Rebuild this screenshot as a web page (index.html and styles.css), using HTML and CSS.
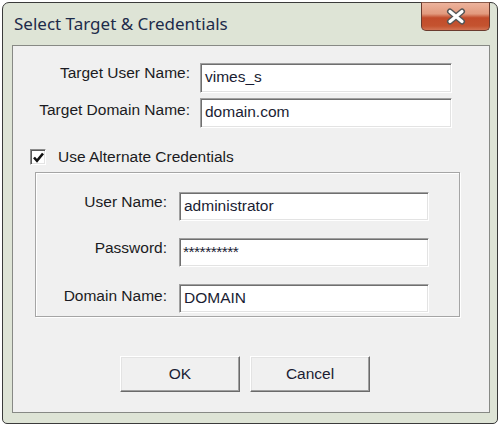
FILE: index.html
```html
<!DOCTYPE html>
<html>
<head>
<meta charset="utf-8">
<link rel="stylesheet" href="styles.css">
</head>
<body>
<div class="window">
  <div class="titlebar">
    <div class="title">Select Target &amp; Credentials</div>
    <div class="close">
      <svg width="24" height="17" viewBox="0 0 24 17">
        <path d="M6 3.5 L18 13.5 M18 3.5 L6 13.5" stroke="#555555" stroke-width="6" stroke-linecap="round"/>
        <path d="M6 3.5 L18 13.5 M18 3.5 L6 13.5" stroke="#ffffff" stroke-width="3.2" stroke-linecap="round"/>
      </svg>
    </div>
  </div>
  <div class="client">
    <div class="top-grid">
      <div class="label l1">Target User Name:</div>
      <div class="field wide">vimes_s</div>
      <div class="label l2">Target Domain Name:</div>
      <div class="field wide">domain.com</div>
    </div>
    <div class="check-row">
      <div class="checkbox">
        <svg width="13" height="13" viewBox="0 0 13 13">
          <path d="M2 6.5 L5 9.8 L11 2.5" stroke="#111" stroke-width="2.6" fill="none"/>
        </svg>
      </div>
      <div class="check-label">Use Alternate Credentials</div>
    </div>
    <div class="group">
      <div class="label g1">User Name:</div>
      <div class="field narrow">administrator</div>
      <div class="label g2">Password:</div>
      <div class="field narrow pw">**********</div>
      <div class="label g3">Domain Name:</div>
      <div class="field narrow">DOMAIN</div>
    </div>
    <div class="buttons">
      <div class="btn">OK</div>
      <div class="btn">Cancel</div>
    </div>
  </div>
</div>
</body>
</html>
```
FILE: styles.css
```css
* { box-sizing: border-box; }
html, body { margin: 0; padding: 0; background: #ffffff; }
body { font-family: "Liberation Sans", Arial, sans-serif; font-size: 15.5px; color: #1b1b22; }

.window {
  margin: 2px 0 0 2px;
  width: 496px;
  height: 422px;
  border: 1px solid #3b3b3b;
  border-radius: 7px 7px 5px 5px;
  background: #dee4d6;
  display: flex;
  flex-direction: column;
  padding: 0 7px 10px 9px;
}

.titlebar {
  height: 42px;
  display: flex;
  align-items: flex-start;
  justify-content: space-between;
  flex: none;
}
.title {
  font-family: "Noto Sans", "Open Sans", sans-serif;
  font-size: 17px;
  color: #1d2b4a;
  margin: 11px 0 0 2px;
  line-height: 20px;
}
.close {
  width: 69px;
  height: 29px;
  margin-top: -1px;
  border: 1px solid #6a3b2e;
  border-top-color: #8a5a4a;
  border-radius: 0 0 5px 5px;
  background: linear-gradient(to bottom, #edb39c 0%, #e29a7e 40%, #d07052 48%, #c24c2b 55%, #c4532f 85%, #d27353 100%);
  display: flex;
  align-items: center;
  justify-content: center;
}

.client {
  flex: 1;
  background: #f0f0f0;
  border: 1px solid #878985;
  display: flex;
  flex-direction: column;
}

.top-grid {
  display: grid;
  grid-template-columns: 177px 252px;
  column-gap: 10px;
  row-gap: 5px;
  padding-top: 17px;
}
.label {
  text-align: right;
  line-height: 18px;
  align-self: start;
  white-space: nowrap;
}
.l1 { padding-top: 1px; }
.l2 { padding-top: 3px; }

.field {
  background: #ffffff;
  border: 1px solid;
  border-color: #a0a0a0 #ffffff #ffffff #a0a0a0;
  box-shadow: inset 1px 1px 0 #6f6f6f, inset -1px -1px 0 #e3e3e3;
  padding: 3px 0 0 4px;
  line-height: 20px;
  color: #1a1d33;
  white-space: nowrap;
}
.wide { height: 30px; }
.narrow { height: 29px; }
.pw { letter-spacing: -0.5px; padding-left: 3px; }

.check-row {
  display: flex;
  align-items: center;
  margin-top: 21px;
  padding-left: 17px;
  height: 16px;
}
.checkbox {
  width: 16px;
  height: 16px;
  background: #ffffff;
  border: 1px solid;
  border-color: #8a8a8a #ffffff #ffffff #8a8a8a;
  box-shadow: inset 1px 1px 0 #5a5a5a, inset -1px -1px 0 #e3e3e3;
  display: flex;
  align-items: center;
  justify-content: center;
}
.check-label {
  margin-left: 12px;
  line-height: 16px;
}

.group {
  margin: 7px 0 0 22px;
  width: 425px;
  height: 145px;
  border: 1px solid #a5a5a5;
  box-shadow: inset 1px 1px 0 #ffffff, 1px 1px 0 #ffffff;
  display: grid;
  grid-template-columns: 131px 250px;
  column-gap: 12px;
  row-gap: 17px;
  padding-top: 19px;
  align-content: start;
}
.g1 { padding-top: 1px; }
.g2 { padding-top: 1px; }
.g3 { padding-top: 3px; }

.buttons {
  display: flex;
  gap: 10px;
  margin-top: 39px;
  padding-left: 107px;
}
.btn {
  width: 120px;
  height: 36px;
  background: #f0f0f0;
  border: 1px solid;
  border-color: #ffffff #6a6a6a #6a6a6a #ffffff;
  box-shadow: inset -1px -1px 0 #a0a0a0, inset 1px 1px 0 #e3e3e3;
  display: flex;
  align-items: center;
  justify-content: center;
  color: #1b1d33;
  line-height: 18px;
}
```
